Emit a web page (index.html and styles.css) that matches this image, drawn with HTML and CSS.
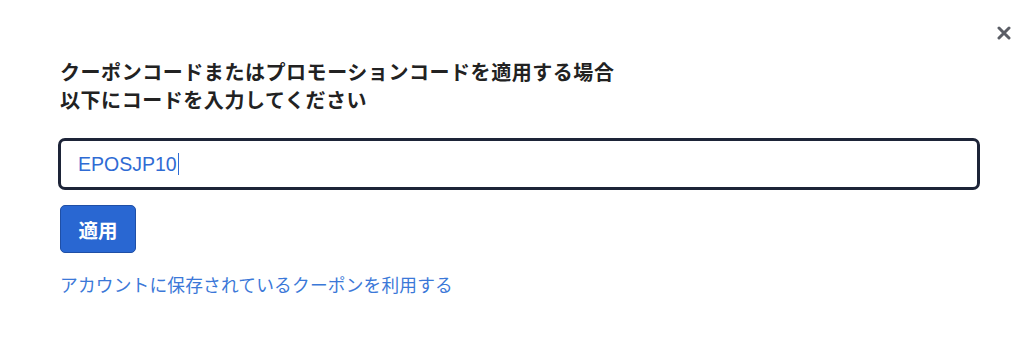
FILE: index.html
```html
<!DOCTYPE html>
<html lang="ja">
<head>
<meta charset="utf-8">
<link rel="stylesheet" href="styles.css">
</head>
<body>
<div class="dialog">
  <button class="close" aria-label="閉じる">
    <svg width="14" height="14" viewBox="0 0 14 14"><path d="M2 2 L12 12 M12 2 L2 12" stroke="#5b5e66" stroke-width="3" stroke-linecap="round"/></svg>
  </button>
  <h2 class="title">クーポンコードまたはプロモーションコードを適用する場合<br>以下にコードを入力してください</h2>
  <div class="field"><span class="value">EPOSJP10</span><span class="caret"></span></div>
  <button class="apply">適用</button>
  <a class="link" href="#">アカウントに保存されているクーポンを利用する</a>
</div>
</body>
</html>
```

FILE: styles.css
```css
html, body {
  margin: 0;
  background: #fff;
}
body {
  width: 1024px;
  height: 354px;
  overflow: hidden;
  font-family: "Noto Sans CJK JP", "Liberation Sans", sans-serif;
}
.dialog {
  position: relative;
  display: flex;
  flex-direction: column;
  align-items: flex-start;
  padding: 58px 44px 0 60px;
}
.close {
  position: absolute;
  top: 26px;
  right: 13px;
  width: 14px;
  height: 14px;
  padding: 0;
  border: 0;
  background: none;
  display: flex;
}
.title {
  margin: 0;
  font-size: 20px;
  letter-spacing: 0.55px;
  line-height: 28px;
  font-weight: 700;
  color: #222;
}
.field {
  margin: 24px 0 0 -2px;
  box-sizing: border-box;
  width: 922px;
  height: 52px;
  border: 3px solid #1d2438;
  border-radius: 7px;
  display: flex;
  align-items: center;
  padding-left: 17px;
}
.value {
  font-family: "Liberation Sans", sans-serif;
  font-size: 19.5px;
  color: #2f6bd4;
}
.caret {
  width: 1px;
  height: 22px;
  background: #2f6bd4;
  margin-left: 1px;
}
.apply {
  margin-top: 15px;
  box-sizing: border-box;
  width: 76px;
  height: 48px;
  border: 1px solid #1f4fa6;
  border-radius: 5px;
  background: #2967d2;
  color: #fff;
  font-family: "Noto Sans CJK JP", sans-serif;
  font-size: 19.5px;
  font-weight: 700;
  padding: 0;
}
.link {
  margin-top: 19px;
  font-size: 17.7px;
  letter-spacing: 0.2px;
  line-height: 24px;
  color: #3b78d8;
  text-decoration: none;
}
```
